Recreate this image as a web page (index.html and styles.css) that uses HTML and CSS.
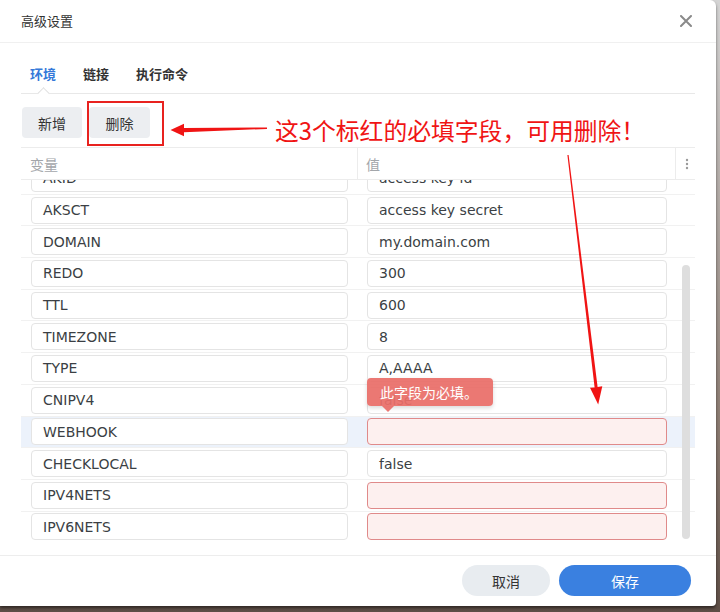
FILE: index.html
```html
<!DOCTYPE html>
<html lang="zh-CN">
<head>
    <meta charset="UTF-8">
    <title>高级设置</title>
    <link rel="stylesheet" href="styles.css">
</head>
<body>
    <div class="dialog">
        <div class="dialog-header">
            <span class="dialog-title">高级设置</span>
            <svg class="close" width="12" height="12" viewBox="0 0 12 12"><path d="M1 1L11 11M11 1L1 11" stroke="#8a8a8a" stroke-width="2" stroke-linecap="round"/></svg>
        </div>

        <div class="dialog-body">
            <div class="tabs">
                <div class="tab active">环境</div>
                <div class="tab">链接</div>
                <div class="tab">执行命令</div>
            </div>

            <div class="toolbar">
                <button class="btn btn-add">新增</button>
                <button class="btn btn-del">删除</button>
            </div>

            <div class="table">
                <div class="table-head">
                    <div class="th th-name">变量</div>
                    <div class="th th-value">值</div>
                    <div class="th th-menu">
                        <svg width="4" height="12" viewBox="0 0 4 12"><circle cx="2" cy="2" r="1.2" fill="#9a9a9a"/><circle cx="2" cy="6" r="1.2" fill="#9a9a9a"/><circle cx="2" cy="10" r="1.2" fill="#9a9a9a"/></svg>
                    </div>
                </div>
                <div class="table-body">
                    <div class="rows">
                        <div class="row"><div class="cell-name"><div class="field">AKID</div></div><div class="cell-value"><div class="field">access key id</div></div></div>
                        <div class="row"><div class="cell-name"><div class="field">AKSCT</div></div><div class="cell-value"><div class="field">access key secret</div></div></div>
                        <div class="row"><div class="cell-name"><div class="field">DOMAIN</div></div><div class="cell-value"><div class="field">my.domain.com</div></div></div>
                        <div class="row"><div class="cell-name"><div class="field">REDO</div></div><div class="cell-value"><div class="field">300</div></div></div>
                        <div class="row"><div class="cell-name"><div class="field">TTL</div></div><div class="cell-value"><div class="field">600</div></div></div>
                        <div class="row"><div class="cell-name"><div class="field">TIMEZONE</div></div><div class="cell-value"><div class="field">8</div></div></div>
                        <div class="row"><div class="cell-name"><div class="field">TYPE</div></div><div class="cell-value"><div class="field">A,AAAA</div></div></div>
                        <div class="row"><div class="cell-name"><div class="field">CNIPV4</div></div><div class="cell-value"><div class="field">false</div></div></div>
                        <div class="row selected"><div class="cell-name"><div class="field">WEBHOOK</div></div><div class="cell-value"><div class="field error"></div></div></div>
                        <div class="row"><div class="cell-name"><div class="field">CHECKLOCAL</div></div><div class="cell-value"><div class="field">false</div></div></div>
                        <div class="row"><div class="cell-name"><div class="field">IPV4NETS</div></div><div class="cell-value"><div class="field error"></div></div></div>
                        <div class="row"><div class="cell-name"><div class="field">IPV6NETS</div></div><div class="cell-value"><div class="field error"></div></div></div>
                    </div>
                    <div class="scroll-thumb"></div>
                </div>
            </div>
        </div>

        <div class="dialog-footer">
            <button class="btn-pill btn-cancel">取消</button>
            <button class="btn-pill btn-save">保存</button>
        </div>

        <!-- validation tooltip -->
        <div class="tooltip">此字段为必填。</div>

        <!-- red annotation drawn over the screenshot -->
        <div class="mark-box"></div>
        <div class="mark-text">这3个标红的必填字段，可用删除！</div>
        <svg class="mark-arrows" width="716" height="606" viewBox="0 0 716 606">
            <polygon points="170.5,130 184,123.8 184,128 267,127.4 267,128.9 184,132.2 184,136.2" fill="#f01414"/>
            <polygon points="567.4,155 568.6,155 597.6,387 602.3,386.3 598.2,404.5 590,387.8 594.6,387.4" fill="#f01414"/>
        </svg>
    </div>
</body>
</html>
```

FILE: styles.css
```css
* {
    box-sizing: border-box;
}

body {
    margin: 0;
    width: 720px;
    height: 612px;
    overflow: hidden;
    background: linear-gradient(#d4d4d4, #8a7a70 70%, #5e4e46);
    font-family: "DejaVu Sans", "Noto Sans CJK SC", sans-serif;
    color: #333;
}

.dialog {
    position: relative;
    width: 716px;
    height: 606px;
    background-color: white;
    border-radius: 0 6px 4px 0;
    display: flex;
    flex-direction: column;
    box-shadow: 0 2px 3px rgba(0,0,0,0.5);
}

.dialog-header {
    height: 43px;
    padding: 0 24px 0 21px;
    display: flex;
    align-items: center;
    justify-content: space-between;
    border-bottom: 1px solid #f0f0f0;
}

.dialog-title {
    font-family: "Noto Sans CJK SC", sans-serif;
    font-size: 13px;
    color: #333;
    margin-top: -1px;
}

.close {
    display: block;
}

.dialog-body {
    padding: 0 21px;
}

.tabs {
    display: flex;
    height: 51px;
    padding-left: 9px;
    border-bottom: 1px solid #e8e8e8;
}

.tab {
    position: relative;
    display: flex;
    align-items: center;
    padding-top: 11px;
    margin-right: 27px;
    font-family: "Noto Sans CJK SC", sans-serif;
    font-size: 13px;
    font-weight: bold;
    color: #333;
}

.tab.active {
    color: #3579d9;
}

.tab.active::after {
    content: "";
    position: absolute;
    left: 50%;
    bottom: -5px;
    width: 8px;
    height: 8px;
    margin-left: -4px;
    background: white;
    border-left: 1px solid #e0e0e0;
    border-top: 1px solid #e0e0e0;
    transform: rotate(45deg);
}

.toolbar {
    display: flex;
    gap: 7px;
    padding: 13px 0 0 1px;
}

.btn {
    height: 31px;
    border: none;
    border-radius: 4px;
    background-color: #eceef1;
    color: #333;
    font-family: "Noto Sans CJK SC", sans-serif;
    font-size: 14px;
    padding: 0;
}

.btn-add {
    width: 60px;
}

.btn-del {
    width: 61px;
}

.table {
    margin-top: 9px;
}

.table-head {
    display: flex;
    height: 33px;
    border-top: 1px solid #ececec;
    border-bottom: 1px solid #ececec;
}

.th {
    display: flex;
    align-items: center;
    font-family: "Noto Sans CJK SC", sans-serif;
    font-size: 14px;
    color: #a3a6aa;
}

.th-name {
    width: 337px;
    padding-left: 9px;
    border-right: 1px solid #ececec;
}

.th-value {
    width: 318px;
    padding-left: 8px;
    border-right: 1px solid #ececec;
}

.th-menu {
    flex: 1;
    justify-content: center;
    padding-left: 2px;
}

.table-body {
    position: relative;
    height: 362px;
    overflow: hidden;
}

.rows {
    margin-top: -17px;
}

.row {
    display: flex;
    align-items: center;
    height: 31.7px;
    border-bottom: 1px solid #f1f1f1;
}

.row.selected {
    background-color: #ecf2fb;
}

.cell-name {
    width: 337px;
    padding-left: 10px;
}

.cell-name .field {
    width: 317px;
}

.cell-value {
    width: 318px;
    padding-left: 9px;
}

.cell-value .field {
    width: 300px;
}

.field {
    height: 27px;
    display: flex;
    align-items: center;
    padding: 0 11px;
    border: 1px solid #e4e4e4;
    border-radius: 4px;
    background-color: white;
    font-size: 14px;
    color: #3b3f44;
}

.field.error {
    background-color: #fdf0ef;
    border-color: #e08a8a;
}

.scroll-thumb {
    position: absolute;
    left: 661px;
    top: 85px;
    width: 8px;
    height: 274px;
    border-radius: 4px;
    background-color: #dedede;
}

.dialog-footer {
    margin-top: 13px;
    border-top: 1px solid #ededed;
    padding: 9px 25px 9px 0;
    display: flex;
    justify-content: flex-end;
    gap: 9px;
}

.btn-pill {
    height: 31px;
    border: none;
    border-radius: 16px;
    font-family: "Noto Sans CJK SC", sans-serif;
    font-size: 14px;
    padding: 0;
}

.btn-cancel {
    width: 88px;
    background-color: #e8ecf0;
    color: #333;
}

.btn-save {
    width: 132px;
    background-color: #3a80e0;
    color: white;
}

.tooltip {
    position: absolute;
    left: 367px;
    top: 378px;
    width: 126px;
    height: 28px;
    padding-left: 13px;
    display: flex;
    align-items: center;
    border-radius: 4px;
    background-color: rgba(233, 110, 104, 0.93);
    color: white;
    font-family: "Noto Sans CJK SC", sans-serif;
    font-size: 14px;
    box-shadow: 0 2px 4px rgba(0,0,0,0.15);
}

.tooltip::after {
    content: "";
    position: absolute;
    left: 15px;
    bottom: -6px;
    border-left: 6px solid transparent;
    border-right: 6px solid transparent;
    border-top: 6px solid rgba(233, 110, 104, 0.93);
}

.mark-box {
    position: absolute;
    left: 87px;
    top: 101px;
    width: 77px;
    height: 45px;
    border: 2px solid #e8221f;
}

.mark-text {
    position: absolute;
    left: 275px;
    top: 116px;
    font-family: "Noto Sans CJK SC", sans-serif;
    font-size: 23.8px;
    line-height: 28px;
    color: #f01414;
    white-space: nowrap;
}

.mark-arrows {
    position: absolute;
    left: 0;
    top: 0;
    pointer-events: none;
}
```
